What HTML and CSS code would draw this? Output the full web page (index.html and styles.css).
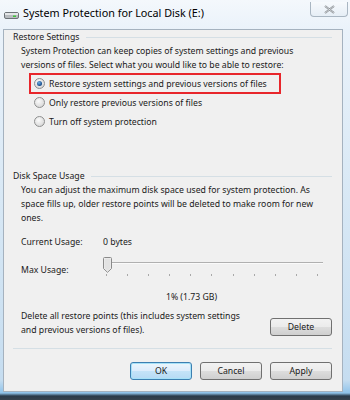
FILE: index.html
```html
<!DOCTYPE html>
<html lang="en">
<head>
    <meta charset="UTF-8">
    <title>System Protection for Local Disk (E:)</title>
    <link rel="stylesheet" href="styles.css">
</head>
<body>
    <div class="window">
        <!-- Barra de titulo -->
        <div class="titlebar">
            <svg class="drive-icon" width="15" height="8" viewBox="0 0 15 8">
                <rect x="0.5" y="1.5" width="14" height="6" rx="1.5" fill="#b8bcc0" stroke="#6d7378"/>
                <rect x="1" y="2" width="13" height="2" fill="#e4e6e8"/>
                <rect x="9" y="4.5" width="3" height="1.5" fill="#3fc23a"/>
            </svg>
            <span class="title">System Protection for Local Disk (E:)</span>
            <button class="close" aria-label="Close">
                <svg width="11" height="9" viewBox="0 0 11 9">
                    <path d="M1 1 L10 8 M10 1 L1 8" stroke="#8a8f94" stroke-width="2" fill="none"/>
                    <path d="M1 1 L10 8 M10 1 L1 8" stroke="#f4f6f8" stroke-width="0.6" fill="none"/>
                </svg>
            </button>
        </div>

        <div class="client">
            <!-- Restore Settings -->
            <div class="group-title"><span>Restore Settings</span></div>
            <p class="text">System Protection can keep copies of system settings and previous versions of files. Select what you would like to be able to restore:</p>

            <div class="radios">
                <label class="radio highlighted"><span class="dot checked"></span>Restore system settings and previous versions of files</label>
                <label class="radio"><span class="dot"></span>Only restore previous versions of files</label>
                <label class="radio"><span class="dot"></span>Turn off system protection</label>
            </div>

            <!-- Disk Space Usage -->
            <div class="group-title disk"><span>Disk Space Usage</span></div>
            <p class="text">You can adjust the maximum disk space used for system protection. As space fills up, older restore points will be deleted to make room for new ones.</p>

            <div class="usage-row">
                <span class="usage-label">Current Usage:</span>
                <span>0 bytes</span>
            </div>

            <div class="usage-row max">
                <span class="usage-label">Max Usage:</span>
                <div class="slider">
                    <div class="track-row">
                        <svg class="thumb" width="9" height="16" viewBox="0 0 9 16">
                            <path d="M0.5 1.5 Q0.5 0.5 1.5 0.5 L7.5 0.5 Q8.5 0.5 8.5 1.5 L8.5 11.5 L4.5 15.3 L0.5 11.5 Z" fill="#f1f1f1" stroke="#8a8a8a"/>
                            <path d="M1.5 1.5 L7.5 1.5 L7.5 11 L4.5 14 L1.5 11 Z" fill="#e2e2e2"/>
                        </svg>
                        <div class="track"></div>
                    </div>
                    <div class="ticks">
                        <i></i><i></i><i></i><i></i><i></i><i></i><i></i><i></i><i></i><i></i><i></i>
                    </div>
                </div>
            </div>

            <div class="percent">1% (1.73 GB)</div>

            <div class="delete-row">
                <p class="text">Delete all restore points (this includes system settings and previous versions of files).</p>
                <button class="btn delete">Delete</button>
            </div>

            <hr class="separator">

            <div class="footer">
                <button class="btn default">OK</button>
                <button class="btn">Cancel</button>
                <button class="btn">Apply</button>
            </div>
        </div>
    </div>
</body>
</html>
```

FILE: styles.css
```css
/* Ventana estilo Windows 7 */
* {
    margin: 0;
    padding: 0;
    box-sizing: border-box;
}

body {
    width: 350px;
    height: 400px;
    overflow: hidden;
    font-family: 'Noto Sans', 'Open Sans', sans-serif;
    font-size: 8.7px;
    line-height: 14px;
    color: #1a1a1a;
    background: linear-gradient(180deg, #f4f8fc 0px, #eaf2fa 30px, #d8e8f5 200px, #c6ddf0 380px, #8fc3ea 393px, #2a3a4a 396px, #38434e 400px);
}

.window {
    height: 392px;
    padding: 0 7px 0 3px;
    display: flex;
    flex-direction: column;
}

.titlebar {
    height: 29px;
    display: flex;
    align-items: flex-start;
}

.drive-icon {
    margin: 11px 0 0 1px;
}

.title {
    font-size: 10.8px;
    margin: 6px 0 0 4px;
    color: #000;
}

.close {
    margin: 2px -5px 0 auto;
    width: 38px;
    height: 15px;
    border: 1px solid #a9b6c2;
    border-top: none;
    border-radius: 0 0 4px 4px;
    background: linear-gradient(#f7fafd, #e6eef6);
    display: flex;
    justify-content: center;
    align-items: center;
}

.client {
    flex: 1;
    background: #f0f0f0;
    border: 1px solid #a5b2bf;
    padding: 0 10px 0 9px;
}

.group-title {
    display: flex;
    align-items: center;
    gap: 6px;
}

.group-title::after {
    content: "";
    flex: 1;
    height: 1px;
    background: #d5dfe5;
}

.group-title.disk {
    margin-top: 38px;
}

.text {
    padding-left: 8px;
    max-width: 303px;
}

.radios {
    margin-top: 2px;
    padding-left: 17px;
    display: flex;
    flex-direction: column;
}

.radio {
    height: 19px;
    display: flex;
    align-items: center;
    gap: 4px;
    padding-left: 4px;
    align-self: flex-start;
}

.radio.highlighted {
    outline: 2px solid #e8262b;
    outline-offset: -1px;
    padding-right: 13px;
}

.dot {
    width: 11px;
    height: 11px;
    border-radius: 50%;
    border: 1px solid #8e8f8f;
    background: radial-gradient(circle at 40% 35%, #fbfbfb 0, #dcdcdc 70%, #c8c8c8 100%);
    position: relative;
}

.dot.checked::after {
    content: "";
    position: absolute;
    left: 2px;
    top: 2px;
    width: 5px;
    height: 5px;
    border-radius: 50%;
    background: radial-gradient(circle at 40% 35%, #6fb2e6, #0d3f80 75%);
}

.usage-row {
    display: flex;
    padding-left: 8px;
    margin-top: 10px;
}

.usage-label {
    width: 82px;
}

.usage-row.max {
    margin-top: 14px;
}

.slider {
    width: 220px;
    margin-top: -6px;
}

.track-row {
    display: flex;
    align-items: center;
}

.track {
    flex: 1;
    height: 2px;
    border-top: 1px solid #b0b0b0;
    border-bottom: 1px solid #fafafa;
    margin-top: -4px;
}

.ticks {
    display: flex;
    justify-content: space-between;
    width: 212px;
    margin: 1px 0 0 3px;
}

.ticks i {
    width: 1px;
    height: 2px;
    background: #a8a8a8;
}

.percent {
    text-align: center;
    margin: 13px 0 0 38px;
}

.delete-row {
    display: flex;
    justify-content: space-between;
    align-items: flex-start;
    margin-top: 5px;
}

.delete-row .text {
    width: 234px;
}

.btn {
    font-family: inherit;
    font-size: 8.7px;
    flex-shrink: 0;
    width: 62px;
    height: 18px;
    border: 1px solid #707070;
    border-radius: 3px;
    color: #1a1a1a;
    background: linear-gradient(#f2f2f2 0%, #ebebeb 50%, #dddddd 51%, #cfcfcf 100%);
}

.btn.delete {
    margin-top: 9px;
}

.btn.default {
    border-color: #3c7fb1;
    box-shadow: inset 0 0 0 1px #a6e1f8;
    background: linear-gradient(#ecf6fc 0%, #dcecfc 50%, #c4e3f8 51%, #b6daf4 100%);
}

.separator {
    border: none;
    border-top: 1px solid #d5dfe5;
    margin-top: 11px;
}

.footer {
    display: flex;
    justify-content: flex-end;
    gap: 8px;
    margin-top: 13px;
}
```
